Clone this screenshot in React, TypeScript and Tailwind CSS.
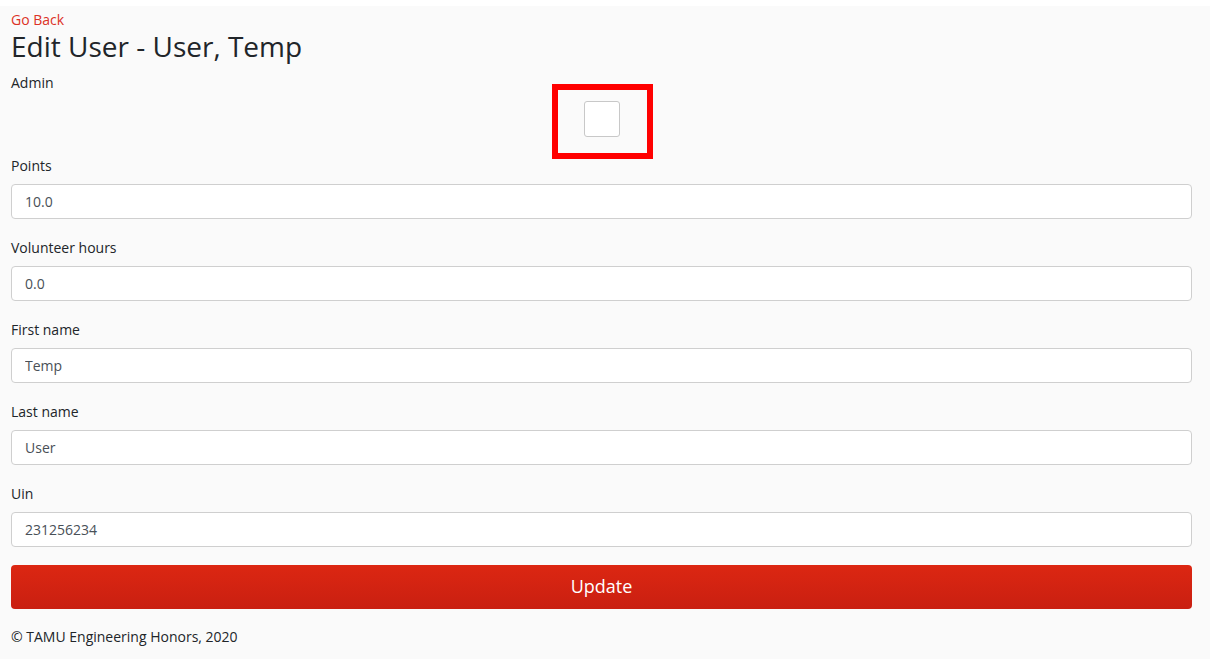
const fields = [
  { label: 'Points', value: '10.0' },
  { label: 'Volunteer hours', value: '0.0' },
  { label: 'First name', value: 'Temp' },
  { label: 'Last name', value: 'User' },
  { label: 'Uin', value: '231256234' },
]

export default function App() {
  return (
    <div className="min-h-screen bg-white pt-[6px] font-['Open_Sans',sans-serif] text-[#212529]">
      <div className="bg-[#fafafa] pl-[11px] pr-[18px] pt-[3px] pb-[12px]">
        <a href="#" className="block text-[14px] leading-[21px] text-[#dc3226]">
          Go Back
        </a>
        <h1 className="text-[28px] leading-[1.2] mb-[8px]">Edit User - User, Temp</h1>

        <div className="mb-[18px]">
          <label className="block text-[14px] leading-[21px] mb-[8px]">Admin</label>
          <div className="flex justify-center">
            <div className="relative">
              <input
                type="checkbox"
                className="block appearance-none w-[36px] h-[36px] rounded-[3px] border border-[#c8c8c8] bg-white"
              />
              <div className="absolute left-[-32px] top-[-17px] w-[101px] h-[75px] border-[6px] border-[#ff0000] pointer-events-none" />
            </div>
          </div>
        </div>

        {fields.map((f) => (
          <div key={f.label} className="mb-[18px] last:mb-[17px]">
            <label className="block text-[14px] leading-[21px] mb-[8px]">{f.label}</label>
            <input
              type="text"
              defaultValue={f.value}
              className="block w-full h-[35px] px-[13px] text-[14px] text-[#495057] bg-white border border-[#cfcfcf] rounded-[4px] outline-none"
            />
          </div>
        ))}

        <button className="w-full h-[44px] rounded-[4px] bg-gradient-to-b from-[#dc2712] to-[#c91f11] text-white text-[18px]">
          Update
        </button>

        <p className="mt-[17px] text-[14px] leading-[21px]">© TAMU Engineering Honors, 2020</p>
      </div>
    </div>
  )
}
